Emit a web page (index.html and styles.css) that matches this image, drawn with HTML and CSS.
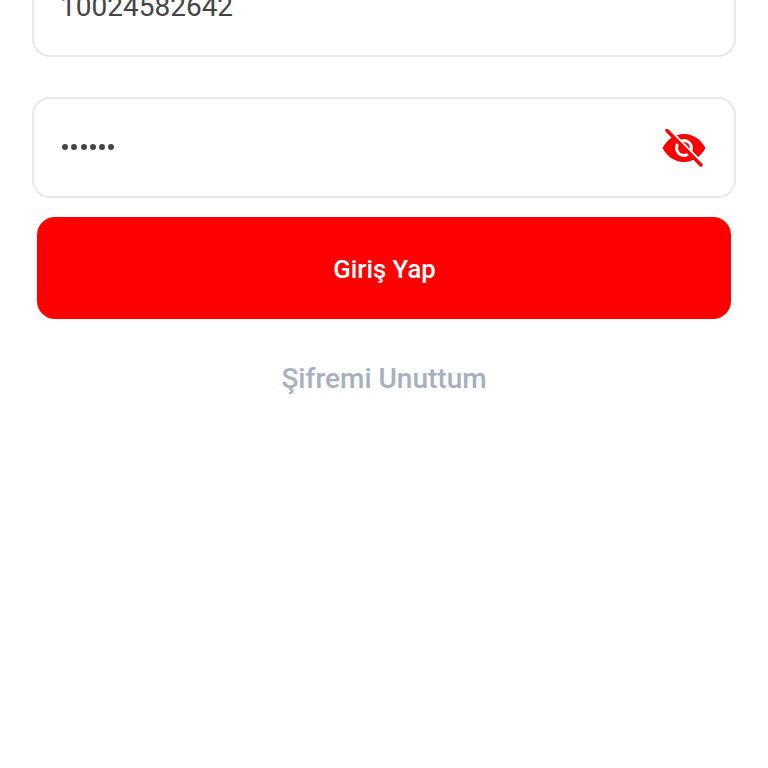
FILE: index.html
```html
<!DOCTYPE html>
<html lang="tr">
<head>
<meta charset="utf-8">
<title>Giriş Yap</title>
<link rel="stylesheet" href="styles.css">
</head>
<body>
<main class="form">
  <div class="field field-user">
    <span class="value">10024582642</span>
  </div>
  <div class="field field-pass">
    <span class="dots" aria-label="Şifre">
      <i></i><i></i><i></i><i></i><i></i><i></i>
    </span>
    <svg class="eye" viewBox="0 0 44 38" aria-hidden="true">
      <path class="eye-fill" fill-rule="evenodd" d="M0.500 19C5 10.500 13 5 22 5s17 5.500 21.500 14C39 27.500 31 33 22 33S5 27.500 0.500 19ZM22 10a9 9 0 1 0 0 18a9 9 0 0 0 0-18Z"/>
      <path class="eye-fill" d="M22 13a6 6 0 1 0 0 12a6 6 0 0 0 0-12Z"/>
      <path class="eye-gap" d="M7 0.500L41 35"/>
      <path class="eye-slash" d="M5 1.500L39 36"/>
    </svg>
  </div>
  <button class="submit" type="button"><span class="submit-label">Giriş Yap</span></button>
  <a class="forgot" href="#">Şifremi Unuttum</a>
</main>
</body>
</html>
```
FILE: styles.css
```css
html, body {
  margin: 0;
  height: 100%;
  background: #fff;
  overflow: hidden;
}
.form {
  display: flex;
  flex-direction: column;
  margin-top: -44px;
  padding: 0 32px;
  font-family: Roboto, "Noto Sans", sans-serif;
}
.field {
  box-sizing: border-box;
  height: 101px;
  display: flex;
  align-items: center;
  justify-content: space-between;
  padding: 0 28px 0 26px;
  border: 2px solid #e8e9eb;
  border-radius: 18px;
  background: #fff;
}
.field-user {
  margin-bottom: 40px;
}
.value {
  font-size: 28px;
  color: #444;
  line-height: 1;
}
.dots {
  display: flex;
  gap: 3.300px;
  margin: 0 0 2px 2px;
}
.dots i {
  width: 6px;
  height: 6px;
  border-radius: 50%;
  background: #444;
}
.eye {
  width: 44px;
  height: 38px;
}
.eye-fill {
  fill: #f00;
}
.eye-gap {
  stroke: #fff;
  stroke-width: 3px;
  fill: none;
}
.eye-slash {
  stroke: #f00;
  stroke-width: 3.500px;
  stroke-linecap: round;
  fill: none;
}
.submit {
  margin: 19px 5px 0;
  height: 102px;
  padding: 2px 0 0 1px;
  border: 0;
  border-radius: 18px;
  background: #f00;
  color: #fff;
  font: 500 25.700px Roboto, sans-serif;
}
.forgot {
  margin-top: 41px;
  align-self: center;
  font-size: 28px;
  font-weight: 500;
  line-height: 38px;
  color: #a6b0bf;
  text-decoration: none;
}
```
